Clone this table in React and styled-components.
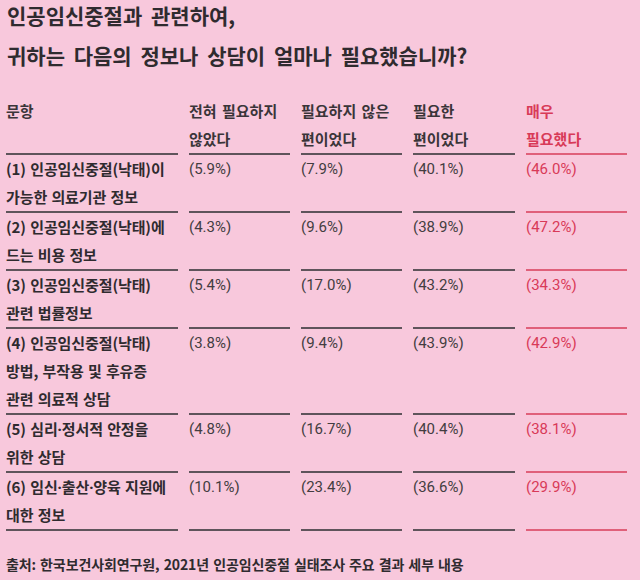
import React from 'react'
import styled, { createGlobalStyle } from 'styled-components'

const GlobalStyle = createGlobalStyle`
    html, body {
        margin: 0;
        padding: 0;
        background: #f8c8dc;
    }
    body {
        font-family: "Noto Sans CJK KR", "Noto Sans", sans-serif;
        color: #363236;
    }
`

const columns = [
    { lines: ['전혀 필요하지', '않았다'] },
    { lines: ['필요하지 않은', '편이었다'] },
    { lines: ['필요한', '편이었다'] },
    { lines: ['매우', '필요했다'], accent: true },
]

const rows = [
    { label: ['(1) 인공임신중절(낙태)이', '가능한 의료기관 정보'], values: ['5.9', '7.9', '40.1', '46.0'] },
    { label: ['(2) 인공임신중절(낙태)에', '드는 비용 정보'], values: ['4.3', '9.6', '38.9', '47.2'] },
    { label: ['(3) 인공임신중절(낙태)', '관련 법률정보'], values: ['5.4', '17.0', '43.2', '34.3'] },
    { label: ['(4) 인공임신중절(낙태)', '방법, 부작용 및 후유증', '관련 의료적 상담'], values: ['3.8', '9.4', '43.9', '42.9'] },
    { label: ['(5) 심리·정서적 안정을', '위한 상담'], values: ['4.8', '16.7', '40.4', '38.1'] },
    { label: ['(6) 임신·출산·양육 지원에', '대한 정보'], values: ['10.1', '23.4', '36.6', '29.9'] },
]

// the middle dot in the CJK font is full width, the original uses a narrow one
const withDots = (text) => text.split('·').flatMap((part, i) =>
    i === 0 ? [part] : [<Dot key={i}>·</Dot>, part]
)

const Survey = () => {
    return (
        <Page>
            <Title>
                <span>인공임신중절과 관련하여,</span>
                <span>귀하는 다음의 정보나 상담이 얼마나 필요했습니까?</span>
            </Title>
            <Table>
                <Row>
                    <HeadCell>문항</HeadCell>
                    {columns.map((c, i) => (
                        <HeadCell key={i} $accent={c.accent}>
                            {c.lines.map((l, j) => <span key={j}>{l}</span>)}
                        </HeadCell>
                    ))}
                </Row>
                {rows.map((r, i) => (
                    <Row key={i}>
                        <LabelCell>
                            {r.label.map((l, j) => <span key={j}>{withDots(l)}</span>)}
                        </LabelCell>
                        {r.values.map((v, j) => (
                            <ValueCell key={j} $accent={j === 3}>({v}%)</ValueCell>
                        ))}
                    </Row>
                ))}
            </Table>
            <Source>출처: 한국보건사회연구원, 2021년 인공임신중절 실태조사 주요 결과 세부 내용</Source>
        </Page>
    )
}

const Page = styled.main`
    width: 640px;
    height: 580px;
    box-sizing: border-box;
    padding: 1px 13px 0 6px;
    overflow: hidden;
`

const Title = styled.h1`
    margin: 0 0 28px 1px;
    font-size: 21px;
    font-weight: 700;
    line-height: 28px;
    letter-spacing: 0;
    word-spacing: 4px;
    color: #2f2b2f;
    display: flex;
    flex-direction: column;
    gap: 12px;
`

const Table = styled.div`
    display: flex;
    flex-direction: column;
`

const Row = styled.div`
    display: grid;
    grid-template-columns: 172px 101px 101px 102px 101px;
    column-gap: 11px;
`

const Cell = styled.div`
    display: flex;
    flex-direction: column;
    font-size: 15px;
    line-height: 28px;
    white-space: nowrap;
    border-bottom: 2px solid ${p => p.$accent ? '#e0607a' : '#5f545b'};
`

const HeadCell = styled(Cell)`
    font-weight: 700;
    letter-spacing: 0;
    word-spacing: 2px;
    color: ${p => p.$accent ? '#d83a58' : '#3a3539'};
`

const LabelCell = styled(Cell)`
    font-weight: 700;
    letter-spacing: -0.1px;
    word-spacing: 1px;
    color: #2f2b2f;
`

const Dot = styled.span`
    font-family: "Noto Sans", sans-serif;
`

const ValueCell = styled(Cell)`
    font-family: Roboto, "Noto Sans", sans-serif;
    font-weight: 400;
    letter-spacing: 0;
    color: ${p => p.$accent ? '#d83a58' : '#433d41'};
`

const Source = styled.p`
    margin: 19px 0 0;
    font-size: 14px;
    font-weight: 700;
    line-height: 28px;
    letter-spacing: -0.1px;
    word-spacing: 1px;
    color: #2f2b2f;
`

export default function App() {
    return (
        <>
            <GlobalStyle />
            <Survey />
        </>
    )
}
